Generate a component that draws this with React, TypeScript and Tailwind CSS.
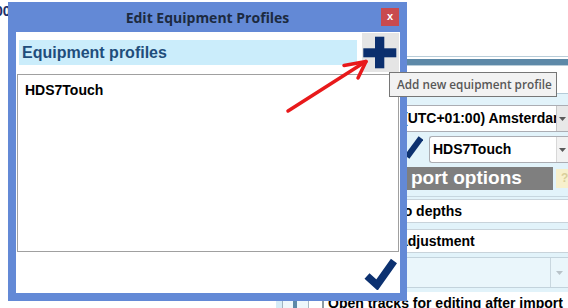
import React from "react";

function Arrow({ light = false }: { light?: boolean }) {
  return (
    <svg width="7" height="4" viewBox="0 0 7 4">
      <path d="M0 0 L7 0 L3.5 4 Z" fill={light ? "#b9c3c9" : "#5a5a5a"} />
    </svg>
  );
}

export default function App() {
  return (
    <div className="relative w-[568px] h-[308px] overflow-hidden bg-white flex items-start font-['Liberation_Sans',Arial,sans-serif]">
      {/* background app: left strip */}
      <div className="w-[320px] shrink-0 h-[308px] flex flex-col">
        <div className="-ml-[5px] mt-[3px] text-[14px] font-bold leading-[16px] text-[#1b2f6a]">00</div>
        <div className="mt-auto ml-[276px] h-[7px] flex shrink-0">
          <div className="w-[7px] h-[7px] bg-[#d6ecf7] border-r border-[#9fb3c0]" />
          <div className="w-[10px] h-[7px] bg-[#eef7fb]" />
          <div className="w-[4px] h-[7px] bg-[#5d89a8]" />
          <div className="w-[12px] h-[7px] bg-[#eef7fb] border-r border-[#a8b8c2]" />
        </div>
      </div>
      {/* background app: main column */}
      <div className="w-[248px] shrink-0 flex flex-col">
        <div className="h-[56px] shrink-0" />
        <div className="h-px shrink-0 bg-[#b9cdd9]" />
        <div className="h-[2px] shrink-0" />
        <div className="h-[6px] shrink-0 bg-[#5d89a8]" />
        <div className="h-px shrink-0 bg-[#b9cdd9]" />
        <div className="h-[27px] shrink-0" />
        <div className="h-px shrink-0 bg-[#b5cbd8]" />
        <div className="bg-[#e2f3fa] flex flex-col shrink-0 pt-[11px] pb-[4px]">
          <div className="ml-[70px] h-[27px] shrink-0 flex bg-white border-y border-l border-[#abadb3]">
            <div className="flex-1 overflow-hidden whitespace-nowrap pl-[12px] text-[14px] font-bold text-black flex items-center">
              (UTC+01:00) Amsterdam
            </div>
            <div className="w-[12px] bg-[#e8e8e8] border-l border-[#c6c6c6] flex items-center justify-center">
              <Arrow />
            </div>
          </div>
          <div className="mt-[4px] h-[27px] shrink-0 flex items-stretch">
            <div className="ml-[87px] w-[16px] flex items-center">
              <svg width="16" height="27" viewBox="0 0 16 27">
                <path d="M0 21 L14 2" stroke="#0c3170" strokeWidth="6" />
              </svg>
            </div>
            <div className="ml-[6px] flex-1 flex bg-white border-y border-l border-[#abadb3] rounded-l-[3px]">
              <div className="flex-1 overflow-hidden whitespace-nowrap pl-[3px] text-[14px] font-bold text-black flex items-center">
                HDS7Touch
              </div>
              <div className="w-[12px] bg-[#f2f2f2] border-l border-[#d8d8d8] flex items-center justify-center">
                <Arrow />
              </div>
            </div>
          </div>
          <div className="mt-[4px] h-[23px] shrink-0 flex">
            <div className="ml-[60px] w-[173px] bg-[#7f7f7f] pl-[31px] flex items-center text-[19px] font-bold text-white whitespace-nowrap overflow-hidden">
              port options
            </div>
            <div className="ml-[3px] mt-[2px] w-[12px] h-[19px] bg-[#f7f0cc] pl-[5px] text-[12px] font-bold text-[#d9cf9c] leading-[19px] overflow-hidden">
              ?
            </div>
          </div>
          <div className="mt-[6px] h-px shrink-0 bg-[#c6d6df]" />
          <div className="mt-[2px] ml-[60px] h-[24px] shrink-0 bg-white border-y border-[#c8d3da] pl-[19px] flex items-center text-[14px] font-bold text-black whitespace-nowrap">
            to depths
          </div>
          <div className="mt-[6px] ml-[60px] h-[24px] shrink-0 bg-white border-y border-[#c8d3da] pl-[20px] flex items-center text-[14px] font-bold text-black whitespace-nowrap">
            adjustment
          </div>
          <div className="mt-[4px] ml-[60px] h-[31px] shrink-0 flex bg-[#eaf6fb] border-y border-l border-[#c3d3dc]">
            <div className="flex-1" />
            <div className="w-[18px] border-l border-[#c9d7df] flex items-center justify-center">
              <Arrow light />
            </div>
          </div>
        </div>
        <div className="h-[3px] shrink-0" />
        <div className="h-[16px] shrink-0 flex items-start">
          <div className="w-[4px] h-[14px] mt-[2px] border-r-2 border-[#8c9aa3]" />
          <div className="ml-[4px] text-[14px] font-bold leading-[16px] text-black whitespace-nowrap">
            Open tracks for editing after import
          </div>
        </div>
      </div>

      {/* dialog window */}
      <div className="absolute left-[8px] top-[2px] w-[399px] h-[299px] bg-[#6389d6] flex flex-col">
        <div className="h-[30px] px-[8px] flex items-center">
          <div className="w-[18px]" />
          <div className="flex-1 text-center font-['Open_Sans',sans-serif] font-bold text-[14px] text-[#1c2a40] whitespace-nowrap">
            Edit Equipment Profiles
          </div>
          <div className="w-[18px] h-[18px] bg-[#c94a4e] flex items-center justify-center text-white text-[11px] font-bold leading-none pb-[2px]">
            x
          </div>
        </div>
        <div className="flex-1 ml-[8px] mr-[7px] mb-[8px] bg-white flex flex-col">
          <div className="flex items-start h-[40px] shrink-0">
            <div className="mt-[8px] ml-[3px] w-[338px] h-[25px] bg-[#cbedfb] pl-[3px] flex items-center text-[16px] font-bold text-[#1f4e7c] whitespace-nowrap">
              Equipment profiles
            </div>
            <div className="ml-[5px] mt-[1px] w-[37px] h-[39px] bg-[#e5e5e5]">
              <svg width="37" height="39" viewBox="0 0 37 39">
                <rect x="1.3" y="15.3" width="33" height="9" fill="#0b2f6e" />
                <rect x="13" y="3.7" width="9.3" height="31.6" fill="#0b2f6e" />
              </svg>
            </div>
          </div>
          <div className="mt-[2px] mx-[1px] h-[178px] shrink-0 border border-[#a0a0a0] pl-[7px] pt-[7px]">
            <div className="text-[14px] font-bold leading-[16px] text-black">HDS7Touch</div>
          </div>
          <div className="flex-1 flex justify-end items-start pr-[3px] pt-[6px]">
            <svg width="34" height="32" viewBox="0 0 34 32">
              <polyline points="4,18 14,27 31,3" fill="none" stroke="#0c3170" strokeWidth="7.5" strokeLinejoin="miter" />
            </svg>
          </div>
        </div>
      </div>

      {/* red annotation arrow */}
      <svg className="absolute left-0 top-0 pointer-events-none" width="568" height="308" viewBox="0 0 568 308">
        <g stroke="#e8191b" strokeWidth="3.5" strokeLinecap="round" fill="none">
          <line x1="288" y1="111" x2="365" y2="62" />
          <line x1="366" y1="61.5" x2="344" y2="65.5" />
          <line x1="366" y1="61.5" x2="358" y2="78" />
        </g>
      </svg>

      {/* tooltip */}
      <div className="absolute left-[389px] top-[72px] w-[168px] h-[25px] border border-[#767676] bg-[#f2f2f2] pl-[7px] flex items-center font-['Open_Sans',sans-serif] font-semibold text-[11.75px] text-[#575757] whitespace-nowrap">
        Add new equipment profile
      </div>
    </div>
  );
}
